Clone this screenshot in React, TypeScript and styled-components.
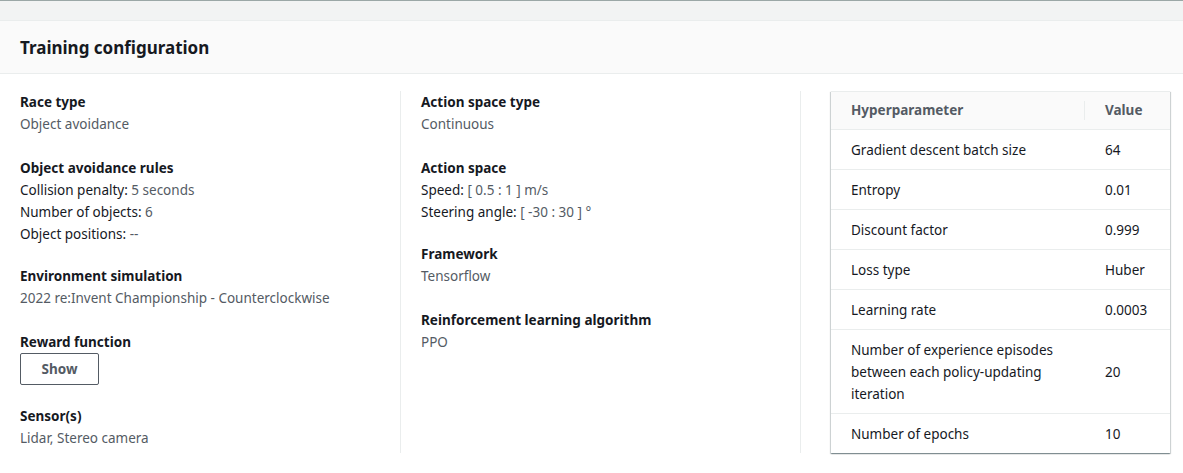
import styled, { createGlobalStyle } from "styled-components";

const GlobalStyle = createGlobalStyle`
  body {
    margin: 0;
    background: #ffffff;
    font-family: "Noto Sans", "Open Sans", sans-serif;
    color: #16191f;
  }
`;

const Page = styled.div`
  width: 1183px;
  height: 473px;
  overflow: hidden;
  background: #f2f3f3;
  border-top: 1px solid #9ba7a6;
`;

const TopStrip = styled.div`
  height: 19px;
  border-bottom: 1px solid #eaeded;
`;

const Panel = styled.div`
  background: #ffffff;
`;

const PanelHeader = styled.div`
  height: 52px;
  background: #fafafa;
  border-bottom: 1px solid #eaeded;
  display: flex;
  align-items: center;
  padding: 0 20px;
`;

const Title = styled.h2`
  margin: 0;
  font-size: 17px;
  font-weight: 700;
  color: #16191f;
`;

const Body = styled.div`
  display: grid;
  grid-template-columns: 381px 380px 1fr;
  column-gap: 20px;
  padding: 17px 13px 20px 20px;
`;

const Column = styled.div<{ $divider?: boolean }>`
  display: flex;
  flex-direction: column;
  gap: 20px;
  border-right: ${(p) => (p.$divider ? "1px solid #eaeded" : "none")};
  min-height: 362px;
`;

const TableColumn = styled.div`
  padding-left: 10px;
`;

const Field = styled.div`
  display: flex;
  flex-direction: column;
`;

const Label = styled.div`
  font-size: 13.5px;
  line-height: 22px;
  font-weight: 700;
  color: #16191f;
`;

const Value = styled.div`
  font-size: 13.5px;
  line-height: 22px;
  margin-bottom: 2px;
  color: #545b64;
`;

const Line = styled.div`
  font-size: 13.5px;
  line-height: 22px;
  color: #16191f;

  span {
    color: #545b64;
  }
`;

const ShowButton = styled.button`
  width: 79px;
  height: 32px;
  background: #ffffff;
  border: 1px solid #545b64;
  border-radius: 2px;
  font-family: inherit;
  font-size: 13.5px;
  font-weight: 700;
  color: #545b64;
  padding: 0;
`;

const Table = styled.table`
  width: 339px;
  border-collapse: collapse;
  table-layout: fixed;
  background: #ffffff;
  box-shadow: 0 1px 1px 0 rgba(0, 28, 36, 0.3), 1px 1px 1px 0 rgba(0, 28, 36, 0.15),
    -1px 1px 1px 0 rgba(0, 28, 36, 0.15);
  border-top: 1px solid #eaeded;
  font-size: 13.5px;
`;

const HeadCell = styled.th<{ $sep?: boolean; $width?: number }>`
  box-sizing: border-box;
  width: ${(p) => (p.$width ? `${p.$width}px` : "auto")};
  height: 38px;
  padding: 0 20px 1px;
  text-align: left;
  font-weight: 700;
  color: #545b64;
  background: #fafafa;
  border-bottom: 1px solid #eaeded;
  position: relative;

  &::after {
    content: "";
    display: ${(p) => (p.$sep ? "block" : "none")};
    position: absolute;
    right: 0;
    top: 9px;
    bottom: 9px;
    width: 1px;
    background: #eaeded;
  }
`;

const Row = styled.tr`
  & + & td {
    border-top: 1px solid #eaeded;
  }
`;

const Cell = styled.td`
  padding: 9px 20px 8px;
  line-height: 22px;
  color: #16191f;
  vertical-align: middle;
`;

const hyperparameters = [
  ["Gradient descent batch size", "64"],
  ["Entropy", "0.01"],
  ["Discount factor", "0.999"],
  ["Loss type", "Huber"],
  ["Learning rate", "0.0003"],
  ["Number of experience episodes between each policy-updating iteration", "20"],
  ["Number of epochs", "10"],
];

export default function App() {
  return (
    <Page>
      <GlobalStyle />
      <TopStrip />
      <Panel>
        <PanelHeader>
          <Title>Training configuration</Title>
        </PanelHeader>
        <Body>
          <Column $divider>
            <Field>
              <Label>Race type</Label>
              <Value>Object avoidance</Value>
            </Field>
            <Field>
              <Label>Object avoidance rules</Label>
              <Line>
                Collision penalty: <span>5 seconds</span>
              </Line>
              <Line>
                Number of objects: <span>6</span>
              </Line>
              <Line>
                Object positions: <span>--</span>
              </Line>
            </Field>
            <Field>
              <Label>Environment simulation</Label>
              <Value>2022 re:Invent Championship - Counterclockwise</Value>
            </Field>
            <Field>
              <Label>Reward function</Label>
              <div>
                <ShowButton>Show</ShowButton>
              </div>
            </Field>
            <Field>
              <Label>Sensor(s)</Label>
              <Value>Lidar, Stereo camera</Value>
            </Field>
          </Column>
          <Column $divider>
            <Field>
              <Label>Action space type</Label>
              <Value>Continuous</Value>
            </Field>
            <Field>
              <Label>Action space</Label>
              <Line>
                Speed: <span>[ 0.5 : 1 ] m/s</span>
              </Line>
              <Line>
                Steering angle: <span>[ -30 : 30 ] °</span>
              </Line>
            </Field>
            <Field>
              <Label>Framework</Label>
              <Value>Tensorflow</Value>
            </Field>
            <Field>
              <Label>Reinforcement learning algorithm</Label>
              <Value>PPO</Value>
            </Field>
          </Column>
          <TableColumn>
            <Table>
              <thead>
                <tr>
                  <HeadCell $sep $width={254}>
                    Hyperparameter
                  </HeadCell>
                  <HeadCell>Value</HeadCell>
                </tr>
              </thead>
              <tbody>
                {hyperparameters.map(([name, value]) => (
                  <Row key={name}>
                    <Cell>{name}</Cell>
                    <Cell>{value}</Cell>
                  </Row>
                ))}
              </tbody>
            </Table>
          </TableColumn>
        </Body>
      </Panel>
    </Page>
  );
}
